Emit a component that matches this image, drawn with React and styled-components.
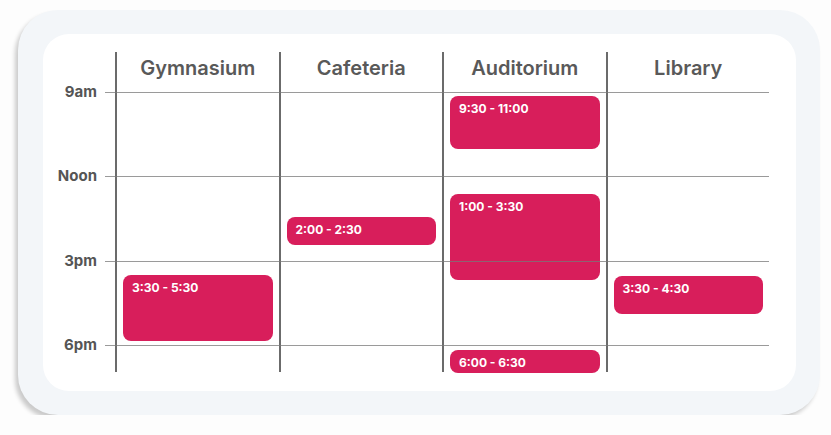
import styled, { createGlobalStyle } from "styled-components";

const GlobalStyle = createGlobalStyle`
  html, body {
    margin: 0;
    background: #fdfdfd;
  }
  body {
    padding: 10px 11px 0 18px;
    font-family: "Inter", "Liberation Sans", sans-serif;
  }
`;

const rooms = [
  { name: "Gymnasium", events: [{ label: "3:30 - 5:30", top: 183, height: 66 }] },
  { name: "Cafeteria", events: [{ label: "2:00 - 2:30", top: 125, height: 28 }] },
  {
    name: "Auditorium",
    events: [
      { label: "9:30 - 11:00", top: 4, height: 53 },
      { label: "1:00 - 3:30", top: 102, height: 86 },
      { label: "6:00 - 6:30", top: 258, height: 23 },
    ],
  },
  { name: "Library", events: [{ label: "3:30 - 4:30", top: 184, height: 38 }] },
];

const hours = ["9am", "Noon", "3pm", "6pm"];

const Card = styled.div`
  width: 802px;
  height: 405px;
  box-sizing: border-box;
  padding: 24px 24px 24px 25px;
  background: #f3f6f9;
  border-radius: 40px;
  box-shadow: -3px 4px 4px rgba(0, 0, 0, 0.2);
`;

const Panel = styled.div`
  height: 100%;
  box-sizing: border-box;
  padding: 18px 27px 0 0;
  background: #fff;
  border-radius: 26px;
`;

const Board = styled.div`
  position: relative;
  display: flex;
`;

const Axis = styled.div`
  width: 72px;
  padding-top: 40px;
`;

const HourGrid = styled.div`
  display: grid;
  grid-template-rows: repeat(3, 84.33px) 1fr;
  height: 280px;
`;

const HourLabel = styled.div`
  padding-right: 18px;
  margin-top: -9px;
  line-height: 18px;
  text-align: right;
  font-size: 15px;
  font-weight: 700;
  color: #555;
`;

const Rooms = styled.div`
  flex: 1;
  display: grid;
  grid-template-columns: repeat(4, 1fr);
`;

const Room = styled.div`
  border-left: 2px solid #6b6b6b;
  display: flex;
  flex-direction: column;
`;

const RoomName = styled.div`
  height: 40px;
  line-height: 32px;
  text-align: center;
  font-size: 20px;
  font-weight: 600;
  color: #595959;
`;

const Track = styled.div`
  position: relative;
  height: 280px;
`;

const Event = styled.div`
  position: absolute;
  left: 6px;
  right: 6px;
  top: ${(p) => p.$top}px;
  height: ${(p) => p.$height}px;
  box-sizing: border-box;
  padding: 6px 9px;
  background: #d81e5b;
  border-radius: 8px;
  color: #fff;
  font-size: 12px;
  font-weight: 700;
  line-height: 14px;
`;

const Rules = styled.div`
  position: absolute;
  left: 62px;
  right: 0;
  top: 40px;
  height: 280px;
  display: grid;
  grid-template-rows: repeat(3, 84.33px) 1fr;
  pointer-events: none;
`;

const Rule = styled.div`
  border-top: 1px solid rgba(120, 120, 120, 0.75);
`;

const App = () => {
  return (
    <>
      <GlobalStyle />
      <Card>
        <Panel>
          <Board>
            <Axis>
              <HourGrid>
                {hours.map((h) => (
                  <HourLabel key={h}>{h}</HourLabel>
                ))}
              </HourGrid>
            </Axis>
            <Rooms>
              {rooms.map((room) => (
                <Room key={room.name}>
                  <RoomName>{room.name}</RoomName>
                  <Track>
                    {room.events.map((ev) => (
                      <Event key={ev.label} $top={ev.top} $height={ev.height}>
                        {ev.label}
                      </Event>
                    ))}
                  </Track>
                </Room>
              ))}
            </Rooms>
            <Rules>
              {hours.map((h) => (
                <Rule key={h} />
              ))}
            </Rules>
          </Board>
        </Panel>
      </Card>
    </>
  );
};

export default App;
